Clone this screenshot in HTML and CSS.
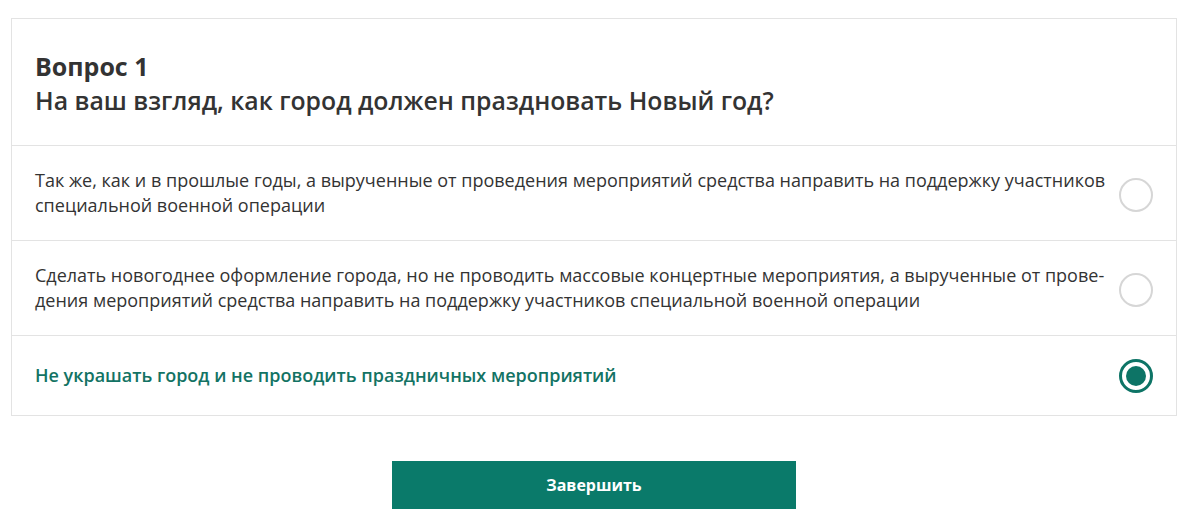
FILE: index.html
```html
<!DOCTYPE html>
<html lang="ru">
<head>
<meta charset="utf-8">
<link rel="stylesheet" href="styles.css">
</head>
<body>
<div class="page">
  <div class="card">
    <div class="head">
      <div class="num">Вопрос 1</div>
      <div class="q">На ваш взгляд, как город должен праздновать Новый год?</div>
    </div>
    <div class="opt">
      <div class="txt">Так же, как и в прошлые годы, а вырученные от проведения мероприятий средства направить на поддержку участников специальной военной операции</div>
      <span class="radio"></span>
    </div>
    <div class="opt">
      <div class="txt">Сделать новогоднее оформление города, но не проводить массовые концертные мероприятия, а вырученные от прове&shy;дения мероприятий средства направить на поддержку участников специальной военной операции</div>
      <span class="radio"></span>
    </div>
    <div class="opt sel">
      <div class="txt">Не украшать город и не проводить праздничных мероприятий</div>
      <span class="radio on"></span>
    </div>
  </div>
  <div class="actions">
    <button class="btn">Завершить</button>
  </div>
</div>
</body>
</html>
```

FILE: styles.css
```css
html, body { margin: 0; padding: 0; background: #fff; }
body { font-family: "Open Sans", "Liberation Sans", sans-serif; color: #333; }
.page { padding: 18px 23px 0 11px; }
.card { border: 1px solid #e3e3e3; }
.head { padding: 30px 23px 28px; border-bottom: 1px solid #e3e3e3; }
.num { font-size: 25px; font-weight: 700; line-height: 34px; color: #333; }
.q { font-size: 24.8px; font-weight: 600; line-height: 34px; color: #333; }
.opt { display: flex; align-items: center; padding: 0 23px; border-bottom: 1px solid #e3e3e3; min-height: 94px; }
.opt:last-child { border-bottom: none; min-height: 79px; }
.txt { flex: 1; font-size: 18px; line-height: 25px; color: #333; padding-right: 6px; }
.sel .txt { color: #137364; font-weight: 600; }
.radio { width: 34px; height: 34px; border: 2px solid #d6d6d6; border-radius: 50%; box-sizing: border-box; flex: none; margin-top: 3px; }
.radio.on { border: 3px solid #0d7466; position: relative; margin-top: 0; }
.radio.on::after { content: ""; position: absolute; left: 4px; top: 4px; width: 20px; height: 20px; border-radius: 50%; background: #0d7466; }
.actions { display: flex; justify-content: center; padding-top: 45px; }
.btn { width: 404px; height: 48px; background: #0a7a6a; color: #fff; border: none; font-family: "Open Sans", sans-serif; font-weight: 700; font-size: 16px; }
```
